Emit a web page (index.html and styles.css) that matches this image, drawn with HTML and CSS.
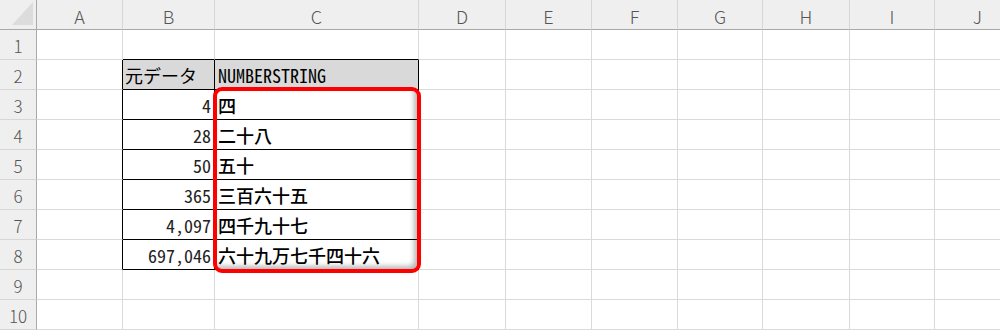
FILE: index.html
```html
<!DOCTYPE html>
<html lang="ja">
<head>
    <meta charset="UTF-8">
    <title>NUMBERSTRING</title>
    <link rel="stylesheet" href="styles.css">
</head>
<body>
<div class="sheet">
    <div class="corner"></div>
    <div class="colhead">A</div><div class="colhead">B</div><div class="colhead">C</div><div class="colhead">D</div><div class="colhead">E</div>
    <div class="colhead">F</div><div class="colhead">G</div><div class="colhead">H</div><div class="colhead">I</div><div class="colhead">J</div>

    <div class="rowhead">1</div>
    <div class="cell"></div><div class="cell bb"></div><div class="cell bb"></div><div class="cell"></div><div class="cell"></div>
    <div class="cell"></div><div class="cell"></div><div class="cell"></div><div class="cell"></div><div class="cell"></div>

    <div class="rowhead">2</div>
    <div class="cell br"></div><div class="cell tb head kana">元データ</div><div class="cell tb head">NUMBERSTRING</div><div class="cell"></div><div class="cell"></div>
    <div class="cell"></div><div class="cell"></div><div class="cell"></div><div class="cell"></div><div class="cell"></div>

    <div class="rowhead">3</div>
    <div class="cell br"></div><div class="cell tb num">4</div><div class="cell tb kanji">四</div><div class="cell"></div><div class="cell"></div>
    <div class="cell"></div><div class="cell"></div><div class="cell"></div><div class="cell"></div><div class="cell"></div>

    <div class="rowhead">4</div>
    <div class="cell br"></div><div class="cell tb num">28</div><div class="cell tb kanji">二十八</div><div class="cell"></div><div class="cell"></div>
    <div class="cell"></div><div class="cell"></div><div class="cell"></div><div class="cell"></div><div class="cell"></div>

    <div class="rowhead">5</div>
    <div class="cell br"></div><div class="cell tb num">50</div><div class="cell tb kanji">五十</div><div class="cell"></div><div class="cell"></div>
    <div class="cell"></div><div class="cell"></div><div class="cell"></div><div class="cell"></div><div class="cell"></div>

    <div class="rowhead">6</div>
    <div class="cell br"></div><div class="cell tb num">365</div><div class="cell tb kanji">三百六十五</div><div class="cell"></div><div class="cell"></div>
    <div class="cell"></div><div class="cell"></div><div class="cell"></div><div class="cell"></div><div class="cell"></div>

    <div class="rowhead">7</div>
    <div class="cell br"></div><div class="cell tb num">4,097</div><div class="cell tb kanji">四千九十七</div><div class="cell"></div><div class="cell"></div>
    <div class="cell"></div><div class="cell"></div><div class="cell"></div><div class="cell"></div><div class="cell"></div>

    <div class="rowhead">8</div>
    <div class="cell br"></div><div class="cell tb num">697,046</div><div class="cell tb kanji">六十九万七千四十六</div><div class="cell"></div><div class="cell"></div>
    <div class="cell"></div><div class="cell"></div><div class="cell"></div><div class="cell"></div><div class="cell"></div>

    <div class="rowhead">9</div>
    <div class="cell"></div><div class="cell"></div><div class="cell"></div><div class="cell"></div><div class="cell"></div>
    <div class="cell"></div><div class="cell"></div><div class="cell"></div><div class="cell"></div><div class="cell"></div>

    <div class="rowhead">10</div>
    <div class="cell"></div><div class="cell"></div><div class="cell"></div><div class="cell"></div><div class="cell"></div>
    <div class="cell"></div><div class="cell"></div><div class="cell"></div><div class="cell"></div><div class="cell"></div>

    <!-- 結果の列を囲む赤枠 -->
    <div class="mark"></div>
</div>
</body>
</html>
```

FILE: styles.css
```css
*{ margin:0; padding:0; box-sizing:border-box;}
html, body{ width:1000px; height:330px; overflow:hidden; background:#fff;}
body{ font-family:"Noto Sans CJK JP", sans-serif;}

.sheet{ position:relative; display:grid; grid-template-columns:37px 86px 92px 204px 87px 86px 86px 85px 87px 85px 86px; grid-auto-rows:30px; width:1021px;}

.corner, .colhead, .rowhead{ background:#efefef; color:#555; display:flex; align-items:center; justify-content:center;}
.corner{ position:relative; border-right:1px solid #a9a9a9; border-bottom:1px solid #a9a9a9;}
.corner::after{ content:""; position:absolute; right:3px; bottom:4px; width:21px; height:23px; background:#dcdcdc; clip-path:polygon(100% 0, 100% 100%, 0 100%);}
.colhead{ font-size:18px; font-weight:300; border-right:1px solid #d6d6d6; border-bottom:1px solid #a9a9a9; padding-top:2px;}
.rowhead{ font-size:17px; font-weight:300; border-right:1px solid #a9a9a9; border-bottom:1px solid #d6d6d6; padding-top:1px;}

.cell{ border-right:1px solid #dadada; border-bottom:1px solid #dadada; display:flex; align-items:center; padding:1px 3px 0 3px; font-family:"Noto Sans Mono CJK JP", "Noto Sans CJK JP", monospace; font-size:18px; color:#000; white-space:nowrap;}
.cell.tb{ border-right-color:#000; border-bottom-color:#000;}
.cell.br{ border-right-color:#000;}
.cell.bb{ border-bottom-color:#000;}
.cell.head{ background:#d9d9d9;}
.cell.num{ justify-content:flex-end; padding-right:3px; color:#222;}
.cell.kana{ font-family:"Noto Sans CJK JP", sans-serif; padding-left:2px;}
.cell.kanji{ font-family:"Noto Sans CJK JP", sans-serif; font-weight:500;}

.mark{ position:absolute; left:213px; top:87px; width:208px; height:186px; border:4px solid #ff0000; border-radius:9px; box-shadow:inset -3px -3px 5px rgba(0,0,0,0.28);}
```
